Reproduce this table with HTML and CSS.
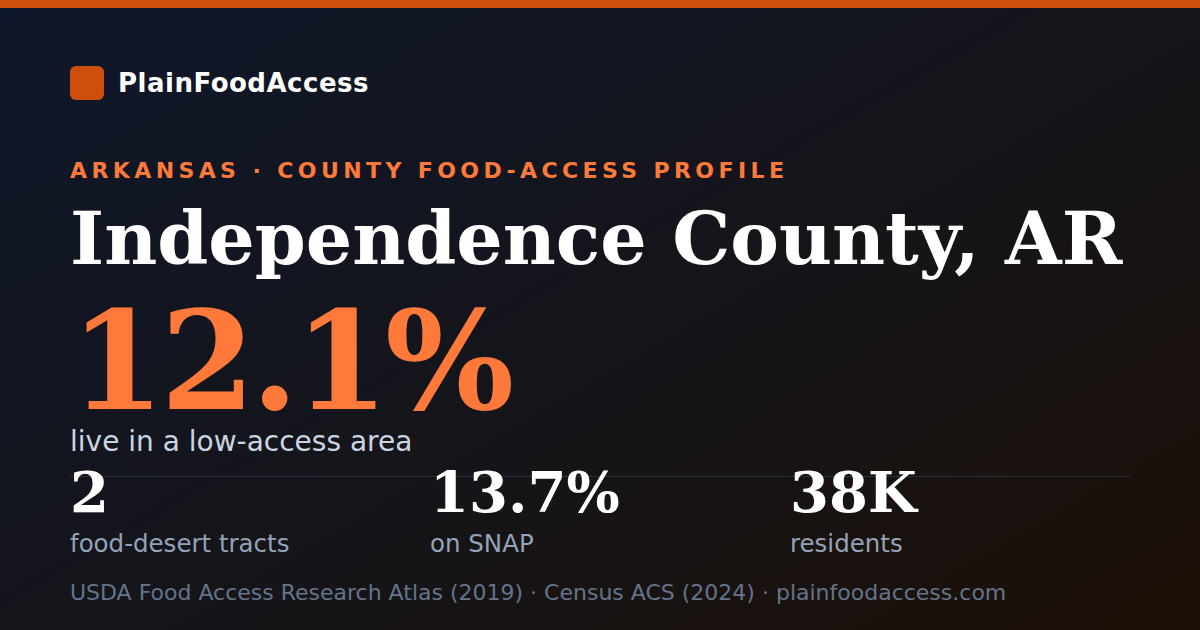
FILE: index.html
```html
<!DOCTYPE html>
<html lang="en">
<head>
<meta charset="utf-8">
<title>Independence County, AR — PlainFoodAccess</title>
<link rel="stylesheet" href="styles.css">
</head>
<body>
<div class="card">
  <div class="topbar"></div>
  <div class="content">
    <div class="brand">
      <span class="logo"></span>
      <span class="brand-name">PlainFoodAccess</span>
    </div>
    <div class="eyebrow">ARKANSAS · COUNTY FOOD-ACCESS PROFILE</div>
    <h1 class="title">Independence County, AR</h1>
    <div class="big">12.1%</div>
    <div class="big-label">live in a low-access area</div>
    <div class="stats">
      <div class="stat">
        <div class="stat-num">2</div>
        <div class="stat-label">food-desert tracts</div>
      </div>
      <div class="stat">
        <div class="stat-num">13.7%</div>
        <div class="stat-label">on SNAP</div>
      </div>
      <div class="stat">
        <div class="stat-num">38K</div>
        <div class="stat-label">residents</div>
      </div>
    </div>
    <div class="source">USDA Food Access Research Atlas (2019) · Census ACS (2024) · plainfoodaccess.com</div>
  </div>
</div>
</body>
</html>
```
FILE: styles.css
```css
* { box-sizing: border-box; margin: 0; padding: 0; }
html, body { width: 1200px; height: 630px; overflow: hidden; }
body { font-family: "DejaVu Sans", sans-serif; background: #111; }
.card {
  width: 1200px; height: 630px;
  background: linear-gradient(150deg, #0f172a 0%, #15151b 50%, #1c1007 100%);
  display: flex; flex-direction: column;
}
.topbar { height: 8px; background: #cc500c; flex: none; }
.content { padding: 58px 70px 0; display: flex; flex-direction: column; }
.brand { display: flex; align-items: center; gap: 14px; height: 34px; }
.logo { width: 34px; height: 34px; border-radius: 6px; background: #cc500c; }
.brand-name { color: #fff; font-weight: bold; font-size: 26px; letter-spacing: 0.5px; }
.eyebrow {
  margin-top: 56px;
  color: #ff7a3a; font-weight: bold; font-size: 22px; letter-spacing: 0.2em;
  line-height: 30px;
}
.title {
  margin-top: 6px;
  font-family: "DejaVu Serif", serif; font-weight: bold; color: #fff;
  font-size: 73px; line-height: 92px; white-space: nowrap;
}
.big {
  margin-top: 10px;
  font-family: "DejaVu Serif", serif; font-weight: bold; color: #ff7a3a;
  font-size: 136px; line-height: 134px; letter-spacing: -0.03em;
}
.big-label { color: #cbd5e1; font-size: 28px; line-height: 28px; }
.stats {
  margin-top: 20px;
  display: grid; grid-template-columns: 360px 360px 1fr;
  border-top: 1px solid #2a303c;
}
.stat-num {
  margin-top: -13px;
  font-family: "DejaVu Serif", serif; font-weight: bold; color: #fff;
  font-size: 56px; line-height: 56px;
}
.stat-label { margin-top: 9px; color: #94a3b8; font-size: 24.5px; line-height: 30px; }
.source { color: #64748b; font-size: 22px; line-height: 26px; margin-top: 21px; white-space: nowrap; }
```
